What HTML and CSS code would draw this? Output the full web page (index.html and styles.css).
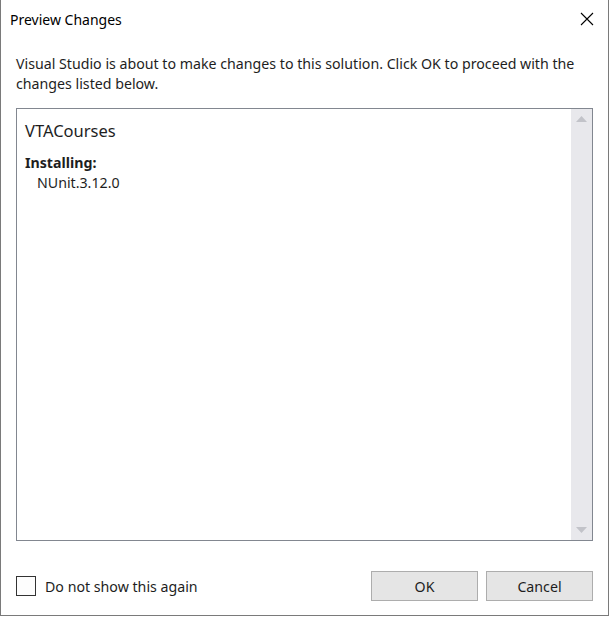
FILE: index.html
```html
<!DOCTYPE html>
<html>
<head>
<meta charset="utf-8">
<link rel="stylesheet" href="styles.css">
</head>
<body>
<div class="window">
  <div class="titlebar">
    <span class="title">Preview Changes</span>
    <svg class="close" width="14" height="14" viewBox="0 0 14 14"><path d="M1 1 L13 13 M13 1 L1 13" stroke="#000" stroke-width="1.1" fill="none"/></svg>
  </div>
  <p class="desc">Visual Studio is about to make changes to this solution. Click OK to proceed with the changes listed below.</p>
  <div class="listbox">
    <div class="content">
      <div class="project">VTACourses</div>
      <div class="section">Installing:</div>
      <div class="item">NUnit.3.12.0</div>
    </div>
    <div class="scrollbar">
      <svg width="21" height="18" viewBox="0 0 21 18"><path d="M5 13 L10.5 7 L16 13 Z" fill="#c2c3c9"/></svg>
      <svg width="21" height="18" viewBox="0 0 21 18"><path d="M5 5 L10.5 11 L16 5 Z" fill="#c2c3c9"/></svg>
    </div>
  </div>
  <div class="footer">
    <label class="check"><span class="box"></span><span>Do not show this again</span></label>
    <div class="buttons">
      <button class="btn">OK</button>
      <button class="btn">Cancel</button>
    </div>
  </div>
</div>
</body>
</html>
```

FILE: styles.css
```css
html, body {
  margin: 0;
  padding: 0;
  background: #ffffff;
}
body {
  font-family: "Noto Sans", "Open Sans", sans-serif;
  color: #1e1e1e;
}
.window {
  box-sizing: border-box;
  width: 609px;
  height: 616px;
  border-left: 1px solid #7a7a7a;
  border-right: 1px solid #7a7a7a;
  border-bottom: 1px solid #7a7a7a;
  background: #fff;
  display: flex;
  flex-direction: column;
}
.titlebar {
  height: 40px;
  display: flex;
  align-items: center;
  justify-content: space-between;
  padding: 0 14px 0 9px;
}
.title {
  font-size: 14px;
  color: #000;
  position: relative;
  top: -1px;
}
.close {
  display: block;
  margin-top: -2px;
}
.desc {
  margin: 14px 0 0 15px;
  width: 570px;
  font-size: 14.2px;
  line-height: 20px;
}
.listbox {
  margin: 14px 0 0 15px;
  width: 577px;
  height: 433px;
  box-sizing: border-box;
  border: 1px solid #828790;
  display: flex;
}
.content {
  flex: 1;
  padding: 10px 0 0 8px;
}
.project {
  font-size: 16.5px;
  line-height: 24px;
}
.section {
  font-size: 14.2px;
  font-weight: bold;
  line-height: 20px;
  margin-top: 10px;
}
.item {
  font-size: 14.2px;
  line-height: 20px;
  padding-left: 12px;
}
.scrollbar {
  width: 21px;
  background: #e8e8ec;
  display: flex;
  flex-direction: column;
  justify-content: space-between;
}
.scrollbar svg {
  display: block;
}
.footer {
  flex: 1;
  display: flex;
  align-items: flex-start;
  justify-content: space-between;
  padding: 30px 15px 0 15px;
}
.check {
  display: flex;
  align-items: center;
  font-size: 14.2px;
  margin-top: 5px;
}
.box {
  box-sizing: border-box;
  width: 20px;
  height: 20px;
  border: 1px solid #333;
  background: #fdfdfd;
  margin-right: 9px;
}
.buttons {
  display: flex;
  gap: 8px;
}
.btn {
  box-sizing: border-box;
  width: 107px;
  height: 30px;
  border: 1px solid #adadad;
  background: #e5e5e5;
  font-family: "Noto Sans", "Open Sans", sans-serif;
  font-size: 14.2px;
  color: #1e1e1e;
  padding: 0;
}
```
